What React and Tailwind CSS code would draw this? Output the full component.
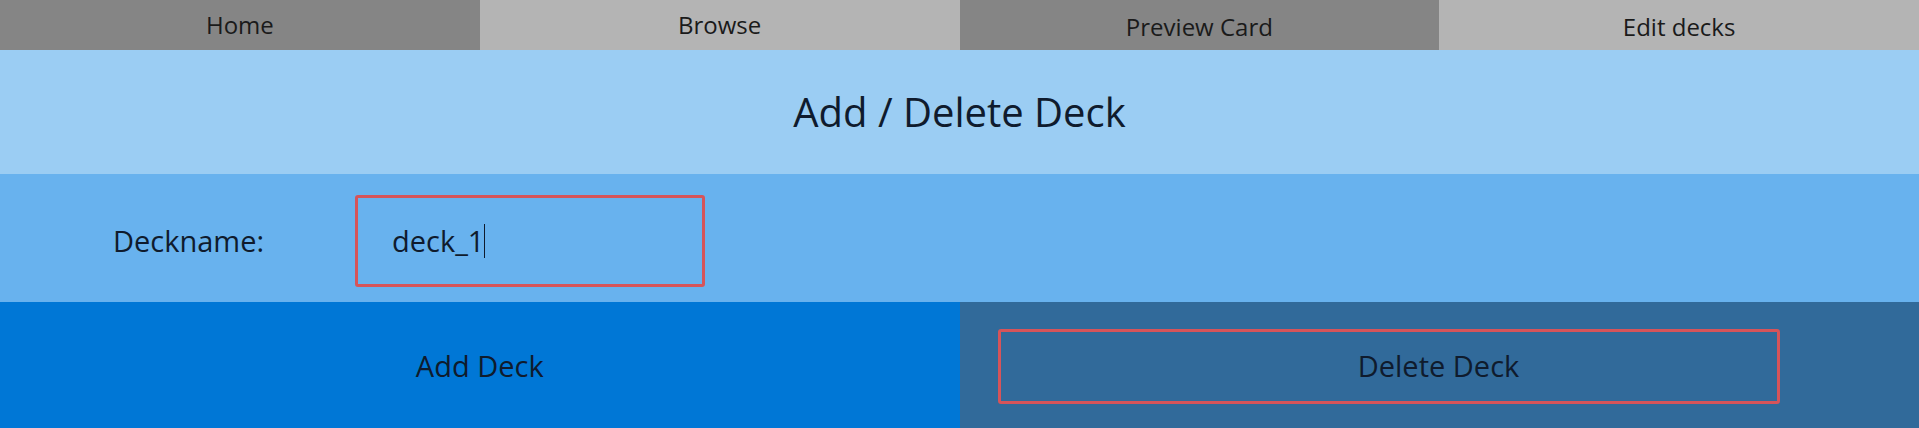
export default function App() {
  return (
    <div className="w-[1919px] h-[428px] flex flex-col overflow-hidden font-['Open_Sans',sans-serif] text-[#0f1b2d]">
      <div className="grid grid-cols-4 h-[50px] text-[24px] text-[#1a1a1a]">
        <div className="bg-[#858585] flex items-center justify-center">Home</div>
        <div className="bg-[#b4b4b4] flex items-center justify-center">Browse</div>
        <div className="bg-[#858585] flex items-center justify-center pt-[3px]">Preview Card</div>
        <div className="bg-[#b4b4b4] flex items-center justify-center pt-[3px]">Edit decks</div>
      </div>
      <div className="h-[124px] bg-[#9bcdf3] flex items-center justify-center text-[40px]">
        Add / Delete Deck
      </div>
      <div className="h-[128px] bg-[#68b2ee] flex items-center pl-[113px] pt-[6px] text-[29px]">
        <div className="w-[242px]">Deckname:</div>
        <div className="w-[350px] h-[92px] border-[3px] border-[#d6545a] rounded-[3px] flex items-center pl-[34px]">
          <span>deck_1</span>
          <span className="w-px h-[34px] bg-[#0f1b2d]"></span>
        </div>
      </div>
      <div className="h-[126px] grid grid-cols-2 text-[29px]">
        <div className="bg-[#0077d6] flex items-center justify-center pt-[2px]">Add Deck</div>
        <div className="bg-[#316a9a] flex items-center pl-[38px] pt-[2px]">
          <div className="w-[782px] h-[75px] border-[3px] border-[#d6545a] rounded-[3px] flex items-center justify-center pl-[100px]">
            Delete Deck
          </div>
        </div>
      </div>
    </div>
  );
}
